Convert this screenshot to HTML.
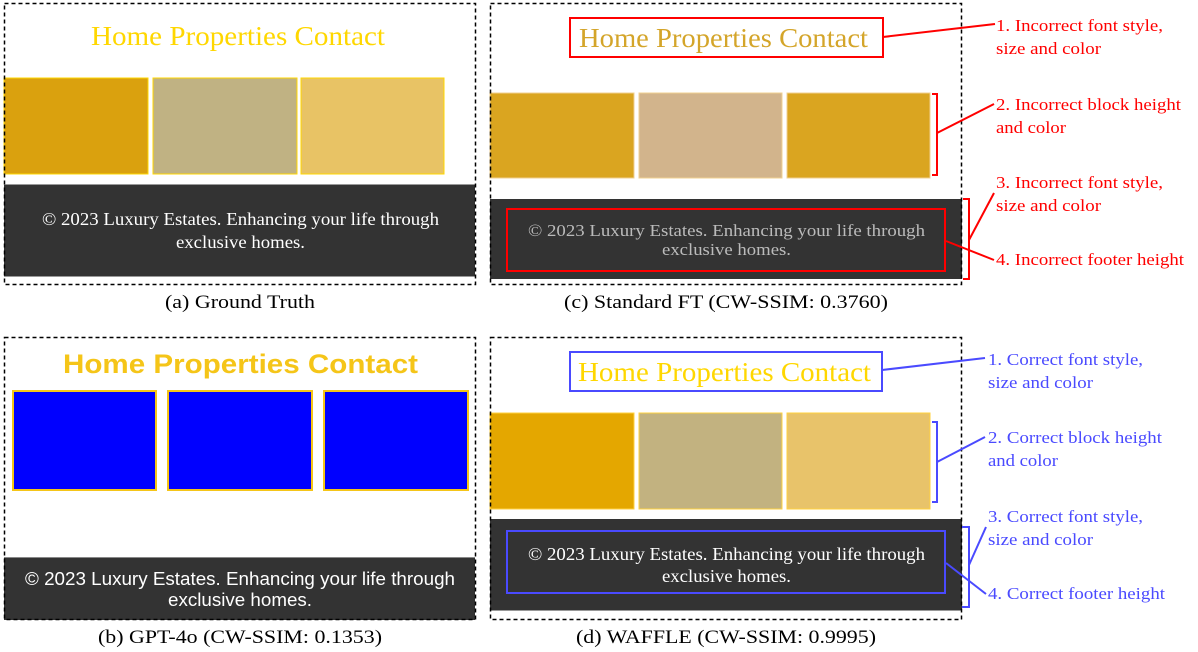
<!DOCTYPE html>
<html><head><meta charset="utf-8"><style>
html,body{margin:0;padding:0;background:#fff;width:1198px;height:652px;overflow:hidden}
svg{display:block}
.s{font-family:"Liberation Serif",serif}
.a{font-family:"Liberation Sans",sans-serif}
</style></head><body>
<svg width="1198" height="652" viewBox="0 0 1198 652" xmlns="http://www.w3.org/2000/svg">
<!-- (a) -->
<text class="s" x="91" y="45" font-size="27" fill="#FFD700" textLength="294" lengthAdjust="spacingAndGlyphs">Home  Properties  Contact</text>
<rect x="4" y="78" width="144" height="96" fill="#DAA10E" stroke="#FFD700" stroke-width="1"/>
<rect x="153" y="78" width="144" height="96" fill="#C0B283" stroke="#FFD700" stroke-width="1"/>
<rect x="301" y="78" width="143" height="96" fill="#E8C365" stroke="#FFD700" stroke-width="1"/>
<rect x="4" y="184" width="471" height="92" fill="#333"/>
<line x1="4" y1="184.5" x2="475" y2="184.5" stroke="#999"/>
<line x1="4" y1="276.5" x2="475" y2="276.5" stroke="#999"/>
<text class="s" x="42" y="225" font-size="18" fill="#fff" textLength="397" lengthAdjust="spacingAndGlyphs">© 2023 Luxury Estates. Enhancing your life through</text>
<text class="s" x="176" y="248" font-size="18" fill="#fff" textLength="129" lengthAdjust="spacingAndGlyphs">exclusive homes.</text>
<rect x="4.5" y="3.5" width="471" height="281" fill="none" stroke="#000" stroke-width="1.5" stroke-dasharray="4,3"/>
<text class="s" x="165" y="308" font-size="19" fill="#000" textLength="150" lengthAdjust="spacingAndGlyphs">(a) Ground Truth</text>

<!-- (c) -->
<text class="s" x="579" y="47" font-size="27" fill="#D4A52A" textLength="289" lengthAdjust="spacingAndGlyphs">Home  Properties  Contact</text>
<rect x="570" y="18" width="313" height="39" fill="none" stroke="#f00" stroke-width="2"/>
<rect x="490" y="93" width="144" height="85" fill="#DAA520" stroke="#F0D090" stroke-width="1"/>
<rect x="639" y="93" width="143" height="85" fill="#D2B48C" stroke="#F0D090" stroke-width="1"/>
<rect x="787" y="93" width="143" height="85" fill="#DAA520" stroke="#F0D090" stroke-width="1"/>
<rect x="490" y="199" width="472" height="80" fill="#333"/>
<rect x="507" y="209" width="438" height="62" fill="none" stroke="#f00" stroke-width="2"/>
<text class="s" x="528" y="236" font-size="17" fill="#bbb" textLength="397" lengthAdjust="spacingAndGlyphs">© 2023 Luxury Estates. Enhancing your life through</text>
<text class="s" x="662" y="255" font-size="17" fill="#bbb" textLength="129" lengthAdjust="spacingAndGlyphs">exclusive homes.</text>
<rect x="490.5" y="3.5" width="471" height="281" fill="none" stroke="#000" stroke-width="1.5" stroke-dasharray="4,3"/>
<text class="s" x="564" y="308" font-size="19" fill="#000" textLength="324" lengthAdjust="spacingAndGlyphs">(c) Standard FT (CW-SSIM: 0.3760)</text>
<g stroke="#f00" stroke-width="2" fill="none">
<path d="M883 37 L995 24"/>
<path d="M932 94 H937 V175 H932"/>
<path d="M937 133 L994 104"/>
<path d="M963 199 H969 V279 H963"/>
<path d="M969 240 L994 193"/>
<path d="M946 241 L994 260"/>
</g>
<g class="s" font-size="17" fill="#f00">
<text x="996" y="31" textLength="167" lengthAdjust="spacingAndGlyphs">1. Incorrect font style,</text>
<text x="996" y="54" textLength="105" lengthAdjust="spacingAndGlyphs">size and color</text>
<text x="996" y="110" textLength="185" lengthAdjust="spacingAndGlyphs">2. Incorrect block height</text>
<text x="996" y="133" textLength="70" lengthAdjust="spacingAndGlyphs">and color</text>
<text x="996" y="188" textLength="167" lengthAdjust="spacingAndGlyphs">3. Incorrect font style,</text>
<text x="996" y="211" textLength="105" lengthAdjust="spacingAndGlyphs">size and color</text>
<text x="996" y="265" textLength="188" lengthAdjust="spacingAndGlyphs">4. Incorrect footer height</text>
</g>

<!-- (b) -->
<text class="a" x="63" y="373" font-size="27" font-weight="bold" fill="#F5C518" textLength="355" lengthAdjust="spacingAndGlyphs">Home  Properties  Contact</text>
<rect x="13" y="391" width="143" height="99" fill="#0000FF" stroke="#F5C518" stroke-width="2"/>
<rect x="168" y="391" width="144" height="99" fill="#0000FF" stroke="#F5C518" stroke-width="2"/>
<rect x="324" y="391" width="144" height="99" fill="#0000FF" stroke="#F5C518" stroke-width="2"/>
<rect x="4" y="557" width="471" height="63" fill="#333"/>
<line x1="4" y1="557.5" x2="475" y2="557.5" stroke="#888"/>
<text class="a" x="25" y="585" font-size="18" fill="#fff" textLength="430" lengthAdjust="spacingAndGlyphs">© 2023 Luxury Estates. Enhancing your life through</text>
<text class="a" x="168" y="606" font-size="18" fill="#fff" textLength="144" lengthAdjust="spacingAndGlyphs">exclusive homes.</text>
<rect x="4.5" y="337.5" width="471" height="282" fill="none" stroke="#000" stroke-width="1.5" stroke-dasharray="4,3"/>
<text class="s" x="98" y="643" font-size="19" fill="#000" textLength="284" lengthAdjust="spacingAndGlyphs">(b) GPT-4o (CW-SSIM: 0.1353)</text>

<!-- (d) -->
<text class="s" x="578" y="381" font-size="27" fill="#FFD700" textLength="293" lengthAdjust="spacingAndGlyphs">Home  Properties  Contact</text>
<rect x="570" y="352" width="312" height="39" fill="none" stroke="#4a4aff" stroke-width="2"/>
<rect x="490" y="413" width="144" height="96" fill="#E4A700" stroke="#FFD23F" stroke-width="1"/>
<rect x="639" y="413" width="143" height="96" fill="#C2B280" stroke="#FFD23F" stroke-width="1"/>
<rect x="787" y="413" width="143" height="96" fill="#E8C36A" stroke="#FFD23F" stroke-width="1"/>
<rect x="490" y="519" width="472" height="91" fill="#333"/>
<line x1="490" y1="610.5" x2="962" y2="610.5" stroke="#999"/>
<rect x="507" y="531" width="438" height="62" fill="none" stroke="#4a4aff" stroke-width="2"/>
<text class="s" x="528" y="560" font-size="18" fill="#fff" textLength="397" lengthAdjust="spacingAndGlyphs">© 2023 Luxury Estates. Enhancing your life through</text>
<text class="s" x="662" y="582" font-size="18" fill="#fff" textLength="129" lengthAdjust="spacingAndGlyphs">exclusive homes.</text>
<rect x="490.5" y="337.5" width="471" height="282" fill="none" stroke="#000" stroke-width="1.5" stroke-dasharray="4,3"/>
<text class="s" x="576" y="643" font-size="19" fill="#000" textLength="300" lengthAdjust="spacingAndGlyphs">(d) WAFFLE (CW-SSIM: 0.9995)</text>
<g stroke="#4a4aff" stroke-width="2" fill="none">
<path d="M882 370 L985 358"/>
<path d="M932 422 H937 V502 H932"/>
<path d="M937 462 L985 437"/>
<path d="M962 527 H969 V607 H962"/>
<path d="M969 565 L986 527"/>
<path d="M946 563 L986 594"/>
</g>
<g class="s" font-size="17" fill="#4a4aff">
<text x="988" y="365" textLength="155" lengthAdjust="spacingAndGlyphs">1. Correct font style,</text>
<text x="988" y="388" textLength="105" lengthAdjust="spacingAndGlyphs">size and color</text>
<text x="988" y="443" textLength="174" lengthAdjust="spacingAndGlyphs">2. Correct block height</text>
<text x="988" y="466" textLength="70" lengthAdjust="spacingAndGlyphs">and color</text>
<text x="988" y="522" textLength="155" lengthAdjust="spacingAndGlyphs">3. Correct font style,</text>
<text x="988" y="545" textLength="105" lengthAdjust="spacingAndGlyphs">size and color</text>
<text x="988" y="599" textLength="177" lengthAdjust="spacingAndGlyphs">4. Correct footer height</text>
</g>
</svg>
</body></html>
